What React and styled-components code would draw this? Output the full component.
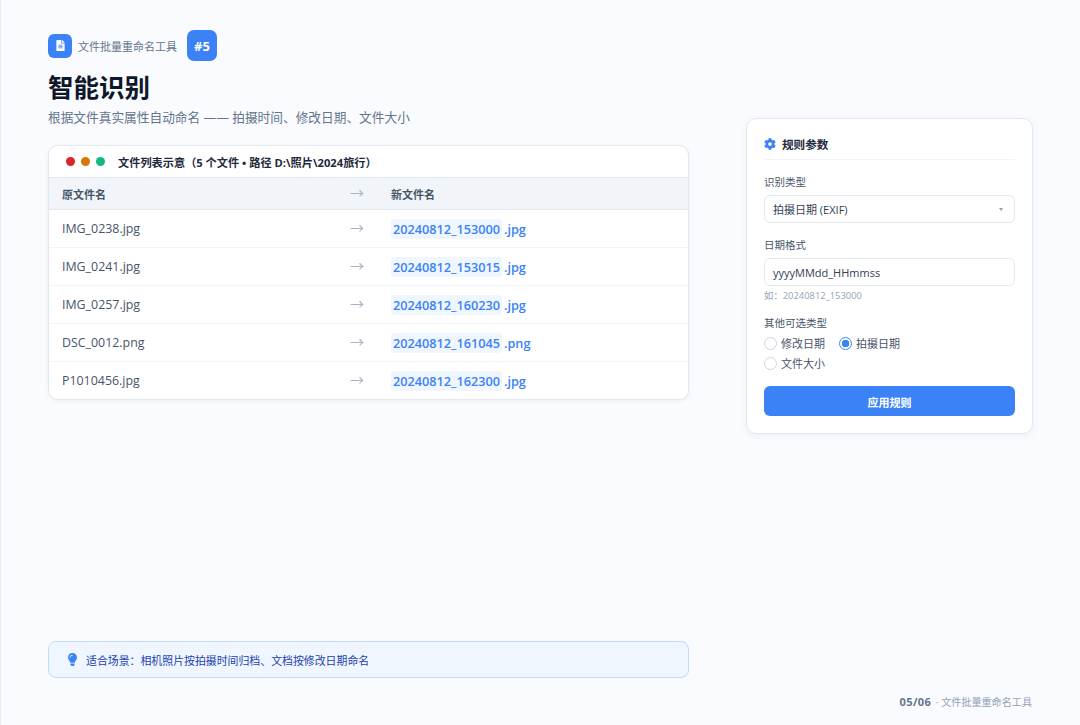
import { createGlobalStyle, styled } from "styled-components";
import { FaFileAlt, FaCog, FaLightbulb } from "react-icons/fa";

const Colors = {
  blue: "#3b82f6",
  ink: "#0f172a",
  text: "#475569",
  muted: "#64748b",
  faint: "#94a3b8",
  line: "#e2e8f0",
};

const GlobalStyle = createGlobalStyle`
  * { box-sizing: border-box; }
  html, body { margin: 0; padding: 0; }
  body {
    width: 1080px;
    height: 725px;
    overflow: hidden;
    background: #f8fafc;
    font-family: "Open Sans", "Noto Sans CJK SC", sans-serif;
  }
`;

const Page = styled.div`
  width: 1080px;
  height: 725px;
  padding: 30px 47px 0 48px;
  background: #f9fbfe;
  box-shadow: inset 1px 0 0 #e9eef5;
  display: grid;
  grid-template-columns: 641px 287px;
  grid-template-rows: 648px 1fr;
  column-gap: 57px;
`;

const LeftColumn = styled.div`
  display: flex;
  flex-direction: column;
`;

const RightColumn = styled.div`
  padding-top: 88px;
`;

const Brand = styled.div`
  display: flex;
  align-items: center;
  height: 31px;
`;

const BrandIcon = styled.div`
  width: 24px;
  height: 24px;
  border-radius: 6px;
  background: ${Colors.blue};
  color: #fff;
  display: flex;
  align-items: center;
  justify-content: center;
  font-size: 11px;
  margin-right: 6px;
`;

const BrandName = styled.span`
  font-size: 11px;
  color: ${Colors.muted};
  margin-right: 10px;
`;

const Badge = styled.div`
  width: 30px;
  height: 31px;
  border-radius: 7px;
  background: ${Colors.blue};
  color: #fff;
  font-size: 13px;
  font-weight: 700;
  display: flex;
  align-items: center;
  justify-content: center;
`;

const Title = styled.h1`
  margin: 9px 0 0;
  font-size: 25.5px;
  line-height: 34px;
  font-weight: 700;
  color: ${Colors.ink};
`;

const Subtitle = styled.p`
  margin: 3px 0 18px;
  font-size: 12.7px;
  line-height: 20px;
  color: ${Colors.muted};
`;

const TableCard = styled.div`
  background: #fff;
  border: 1px solid ${Colors.line};
  border-radius: 10px;
  box-shadow: 0 1px 4px rgba(15, 23, 42, 0.06);
  overflow: hidden;
`;

const TableBar = styled.div`
  height: 32px;
  display: flex;
  align-items: center;
  padding-left: 17px;
  border-bottom: 1px solid ${Colors.line};
`;

const Dot = styled.span`
  width: 9px;
  height: 9px;
  border-radius: 50%;
  margin-right: 6px;
  background: ${(p) => p.$color};
`;

const BarTitle = styled.span`
  margin-left: 7px;
  font-size: 11.2px;
  font-weight: 700;
  color: #1e293b;
`;

const Row = styled.div`
  display: grid;
  grid-template-columns: 282px 47px 1fr;
  align-items: center;
  height: ${(p) => (p.$head ? "32px" : "38px")};
  padding-left: 13px;
  background: ${(p) => (p.$head ? "#f1f5f9" : "#fff")};
  border-bottom: 1px solid ${(p) => (p.$head ? Colors.line : "#f1f5f9")};
  &:last-child { border-bottom: none; height: 37px; }
`;

const HeadCell = styled.span`
  font-size: 11px;
  font-weight: 600;
  color: ${Colors.text};
`;

const OldName = styled.span`
  font-size: 12.4px;
  color: ${Colors.text};
`;

const Arrow = styled.span`
  font-size: 14px;
  color: #a8b4c4;
  line-height: 1;
  padding-left: 6px;
  margin-top: -2px;
`;

const NewName = styled.span`
  font-size: 12.7px;
  font-weight: 600;
  color: ${Colors.blue};
`;

const Stamp = styled.span`
  background: #f0f6ff;
  border-radius: 3px;
  padding: 1px 2px;
  margin-right: 2px;
`;

const Tip = styled.div`
  margin-top: auto;
  height: 37px;
  border: 1px solid #bfdbfe;
  border-radius: 8px;
  background: #eff6ff;
  display: flex;
  align-items: center;
  padding-left: 17px;
  gap: 7px;
  color: ${Colors.blue};
  font-size: 13px;
`;

const TipText = styled.span`
  font-size: 10.9px;
  color: #1e40af;
`;

const Panel = styled.div`
  background: #fff;
  border: 1px solid ${Colors.line};
  border-radius: 10px;
  box-shadow: 0 2px 8px rgba(15, 23, 42, 0.05);
  padding: 14px 17px 17px;
  height: 316px;
`;

const PanelHead = styled.div`
  display: flex;
  align-items: center;
  gap: 6px;
  height: 27px;
  padding-bottom: 5px;
  border-bottom: 1px solid #f1f5f9;
  margin-bottom: 15px;
  color: ${Colors.blue};
  font-size: 12px;
`;

const PanelTitle = styled.span`
  font-size: 11.6px;
  font-weight: 700;
  color: #1e293b;
`;

const Label = styled.div`
  font-size: 10.5px;
  line-height: 14px;
  color: ${Colors.text};
  margin-bottom: 6px;
`;

const Field = styled.div`
  height: 28px;
  border: 1px solid ${Colors.line};
  border-radius: 6px;
  background: #fff;
  display: flex;
  align-items: center;
  justify-content: space-between;
  padding: 0 8px;
  font-size: 11px;
  color: #334155;
  margin-bottom: ${(p) => p.$gap || "15px"};
`;

const Caret = styled.span`
  width: 0;
  height: 0;
  border-left: 2px solid transparent;
  border-right: 2px solid transparent;
  border-top: 3px solid ${Colors.faint};
  margin-right: 3px;
`;

const Hint = styled.div`
  font-size: 9.4px;
  line-height: 12px;
  color: ${Colors.faint};
  margin-bottom: 14px;
`;

const RadioGroup = styled.div`
  display: flex;
  flex-wrap: wrap;
  gap: 6px 14px;
  width: 170px;
  margin-bottom: 16px;
`;

const RadioItem = styled.div`
  display: flex;
  align-items: center;
  gap: 4px;
  height: 14px;
  font-size: 11px;
  color: ${Colors.text};
`;

const RadioMark = styled.span`
  width: 13px;
  height: 13px;
  border-radius: 50%;
  border: ${(p) => (p.$on ? `1.5px solid ${Colors.blue}` : "1.5px solid #cbd5e1")};
  background: ${(p) => (p.$on ? `radial-gradient(circle, ${Colors.blue} 3.5px, #fff 4px)` : "#fff")};
`;

const ApplyButton = styled.button`
  width: 100%;
  height: 30px;
  border: none;
  border-radius: 6px;
  background: ${Colors.blue};
  color: #fff;
  font-family: inherit;
  font-size: 11px;
  font-weight: 600;
  padding: 1px 0 0;
`;

const Footer = styled.div`
  grid-column: 1 / 3;
  padding: 16px 1px 0 0;
  text-align: right;
  font-size: 10.1px;
  color: ${Colors.faint};
`;

const PageNum = styled.b`
  color: ${Colors.muted};
  font-size: 11px;
  letter-spacing: 0.4px;
  margin-right: 2px;
`;

const files = [
  ["IMG_0238.jpg", "20240812_153000", ".jpg"],
  ["IMG_0241.jpg", "20240812_153015", ".jpg"],
  ["IMG_0257.jpg", "20240812_160230", ".jpg"],
  ["DSC_0012.png", "20240812_161045", ".png"],
  ["P1010456.jpg", "20240812_162300", ".jpg"],
];

function App() {
  return (
    <>
      <GlobalStyle />
      <Page>
        <LeftColumn>
          <Brand>
            <BrandIcon><FaFileAlt /></BrandIcon>
            <BrandName>文件批量重命名工具</BrandName>
            <Badge>#5</Badge>
          </Brand>
          <Title>智能识别</Title>
          <Subtitle>根据文件真实属性自动命名 —— 拍摄时间、修改日期、文件大小</Subtitle>
          <TableCard>
            <TableBar>
              <Dot $color="#dc2626" />
              <Dot $color="#d97706" />
              <Dot $color="#10b981" />
              <BarTitle>文件列表示意（5 个文件 • 路径 D:\照片\2024旅行）</BarTitle>
            </TableBar>
            <Row $head>
              <HeadCell>原文件名</HeadCell>
              <Arrow>→</Arrow>
              <HeadCell>新文件名</HeadCell>
            </Row>
            {files.map(([from, stamp, ext]) => (
              <Row key={from}>
                <OldName>{from}</OldName>
                <Arrow>→</Arrow>
                <NewName><Stamp>{stamp}</Stamp>{ext}</NewName>
              </Row>
            ))}
          </TableCard>
          <Tip>
            <FaLightbulb />
            <TipText>适合场景：相机照片按拍摄时间归档、文档按修改日期命名</TipText>
          </Tip>
        </LeftColumn>
        <RightColumn>
          <Panel>
            <PanelHead>
              <FaCog />
              <PanelTitle>规则参数</PanelTitle>
            </PanelHead>
            <Label>识别类型</Label>
            <Field>拍摄日期 (EXIF)<Caret /></Field>
            <Label>日期格式</Label>
            <Field $gap="4px">yyyyMMdd_HHmmss</Field>
            <Hint>如：20240812_153000</Hint>
            <Label>其他可选类型</Label>
            <RadioGroup>
              <RadioItem><RadioMark />修改日期</RadioItem>
              <RadioItem><RadioMark $on />拍摄日期</RadioItem>
              <RadioItem><RadioMark />文件大小</RadioItem>
            </RadioGroup>
            <ApplyButton>应用规则</ApplyButton>
          </Panel>
        </RightColumn>
        <Footer><PageNum>05/06</PageNum> · 文件批量重命名工具</Footer>
      </Page>
    </>
  );
}

export default App;
